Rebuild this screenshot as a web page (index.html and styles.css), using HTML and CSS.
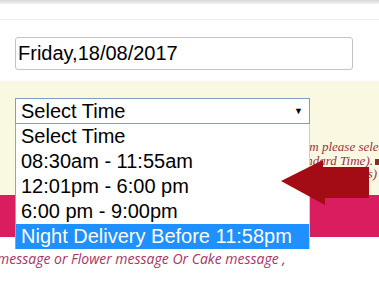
FILE: index.html
```html
<!DOCTYPE html>
<html lang="en">
<head>
  <meta charset="UTF-8">
  <meta name="viewport" content="width=device-width, initial-scale=1.0">
  <title>Delivery Time</title>
  <link rel="stylesheet" href="styles.css">
</head>
<body>
  <div class="topbar"></div>
  <div class="header"></div>

  <div class="date-row">
    <input class="date-input" type="text" value="Friday,18/08/2017" readonly>
  </div>

  <div class="time-row">
    <div class="time-select">
      <span>Select Time</span>
      <span class="caret">&#9660;</span>
    </div>
    <p class="note">
      <span class="line l1">If you want the delivery of your order at 11:58pm please select the option</span>
      <span class="line l2">the option Night Delivery as per (Indian Standard Time).<i class="mark"></i> Extra</span>
      <span class="line l3">charges will be applicable for this (Night Charges)</span>
    </p>
  </div>

  <div class="band"></div>

  <div class="message-row">
    <p class="message">message or Flower message Or Cake message ,</p>
  </div>

  <ul class="time-options">
    <li>Select Time</li>
    <li>08:30am - 11:55am</li>
    <li>12:01pm - 6:00 pm</li>
    <li>6:00 pm - 9:00pm</li>
    <li class="active">Night Delivery Before 11:58pm</li>
  </ul>

  <svg class="pointer" width="379" height="307" viewBox="0 0 379 307">
    <polygon points="281,181 323,160 323,167 369,167 369,198 325,198 325,205" fill="#a30c14"/>
  </svg>
</body>
</html>
```

FILE: styles.css
```css
html, body {
  margin: 0;
  padding: 0;
}
body {
  font-family: 'Liberation Sans', Arial, sans-serif;
  background: #fff;
  width: 379px;
  height: 307px;
  overflow: hidden;
  position: relative;
}
.topbar {
  height: 4px;
  background: linear-gradient(#d6d6d6, #f4f4f4);
}
.header {
  height: 15px;
  border-bottom: 1px solid #ececec;
}
.date-row {
  padding: 17px 0 11px 15px;
}
.date-input {
  display: block;
  box-sizing: border-box;
  width: 338px;
  height: 33px;
  margin: 0;
  padding: 0 2px;
  border: 1px solid #c4c4c4;
  border-radius: 3px;
  font-family: 'Liberation Sans', Arial, sans-serif;
  font-size: 20px;
  color: #000;
  outline: none;
}
.time-row {
  height: 114px;
  box-sizing: border-box;
  padding: 17px 0 0 15px;
  background: #fbf8e2;
  overflow: hidden;
}
.time-select {
  box-sizing: border-box;
  width: 295px;
  height: 26px;
  border: 1px solid #7e9cc7;
  background: #fff;
  display: flex;
  align-items: center;
  justify-content: space-between;
  padding: 0 6px 0 5px;
  font-size: 20px;
  color: #000;
}
.caret {
  font-size: 9px;
}
.note {
  margin: 16px 0 0 0;
  white-space: nowrap;
  font-family: 'Liberation Serif', serif;
  font-style: italic;
  font-size: 13px;
  line-height: 13.5px;
  color: #9c2f45;
}
.line {
  display: block;
}
.l1 {
  padding-left: 47px;
}
.l2 {
  padding-left: 62px;
}
.l3 {
  padding-left: 97px;
}
.mark {
  display: inline-block;
  width: 5px;
  height: 6px;
  margin-left: 2px;
  background: #8a2a2a;
}
.band {
  height: 42px;
  background: #d91d5e;
}
.message-row {
  padding-top: 12px;
}
.message {
  margin: 0 0 0 -3px;
  white-space: nowrap;
  font-family: 'Open Sans', sans-serif;
  font-style: italic;
  font-size: 14px;
  color: #a93363;
}
.time-options {
  position: absolute;
  top: 124px;
  left: 15px;
  width: 295px;
  box-sizing: border-box;
  margin: 0;
  padding: 0;
  list-style: none;
  background: #fff;
  border-left: 1px solid #8ea6c8;
  border-right: 1px solid #d0d0d0;
}
.time-options li {
  height: 25px;
  line-height: 25px;
  padding-left: 5px;
  font-size: 20px;
  color: #000;
  white-space: nowrap;
}
.time-options li.active {
  background: #1e90ff;
  color: #fff;
}
.pointer {
  position: absolute;
  top: 0;
  left: 0;
}
```
